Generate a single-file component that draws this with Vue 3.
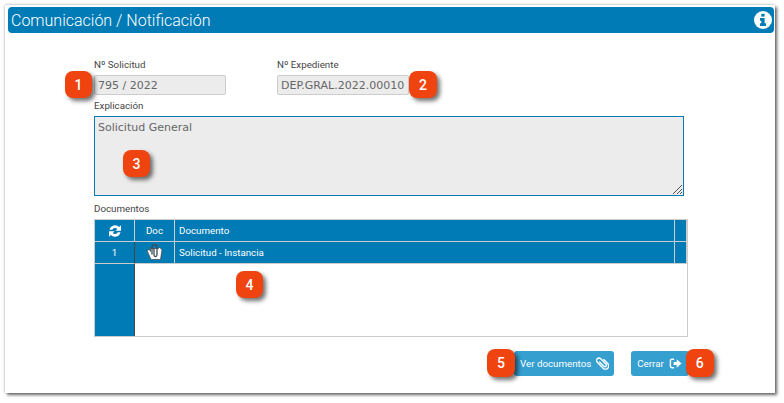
<template>
  <div class="page">
    <div class="card">
      <div class="title-bar">
        <span class="title">Comunicación / Notificación</span>
        <svg class="info-icon" viewBox="0 0 18 18" width="18" height="18">
          <circle cx="9" cy="9" r="9" fill="#fff" />
          <rect x="7.3" y="2.800" width="3.300" height="2.800" fill="#007bb6" />
          <path d="M6 7h4.600v5.200h1.400V15H6v-2.800h1.300V9.700H6z" fill="#007bb6" />
        </svg>
      </div>

      <div class="form">
        <div class="row-top">
          <div class="field">
            <label>Nº Solicitud</label>
            <div class="input">795 / 2022</div>
            <span class="badge badge-1">1</span>
          </div>
          <div class="field">
            <label>Nº Expediente</label>
            <div class="input">DEP.GRAL.2022.00010</div>
            <span class="badge badge-2">2</span>
          </div>
        </div>

        <div class="field-wide">
          <label>Explicación</label>
          <div class="textarea">
            Solicitud General
            <svg class="grip" viewBox="0 0 10 10" width="10" height="10">
              <path d="M1 10L10 1M5 10L10 5M8 10L10 8" stroke="#555" stroke-width="1" fill="none" />
            </svg>
          </div>
          <span class="badge badge-3">3</span>
        </div>

        <div class="docs">
          <label>Documentos</label>
          <div class="grid">
            <div class="cell head center">
              <svg viewBox="0 0 14 14" width="14" height="14">
                <path d="M1.500 5.800A5.700 5.700 0 0 1 11.200 3L13 1.200V6.800H7.400L9.300 4.900A3 3 0 0 0 4.300 5.800z" fill="#fff" />
                <path d="M12.500 8.200A5.700 5.700 0 0 1 2.800 11L1 12.800V7.200H6.600L4.700 9.100A3 3 0 0 0 9.700 8.200z" fill="#fff" />
              </svg>
            </div>
            <div class="cell head center">Doc</div>
            <div class="cell head">Documento</div>
            <div class="cell head"></div>

            <div class="cell center dark-edge">1</div>
            <div class="cell center">
              <svg viewBox="0 0 17 17" width="17" height="17">
                <path d="M1 6.500L3.500 5.500L4.500 7.500V4.500H12.500L13.500 3.500L16 5.500L14.500 15.500H5L3 11z" fill="#fff" stroke="#444" stroke-width=".7" />
                <path d="M6 10.500V3.200a2.500 2.500 0 0 1 5 0V11a1.500 1.500 0 0 1-3 0V4" fill="none" stroke="#3d4a55" stroke-width="1.300" />
              </svg>
            </div>
            <div class="cell">Solicitud - Instancia</div>
            <div class="cell"></div>

            <div class="cell filler-side dark-edge"></div>
            <div class="filler-body"></div>
          </div>
          <span class="badge badge-4">4</span>
        </div>

        <div class="actions">
          <div class="btn-wrap first">
            <span class="badge badge-5">5</span>
            <button class="btn">
              Ver documentos
              <svg viewBox="0 0 14 14" width="13" height="13">
                <path d="M3 5.500L8 10.500a1.600 1.600 0 0 0 2.300-2.300L4.600 2.500a2.600 2.600 0 0 0-3.700 3.700L7.200 12.500a3.500 3.500 0 0 0 5-5L7.500 2.800" fill="none" stroke="#fff" stroke-width="1.500" transform="translate(.5 -.5)" />
              </svg>
            </button>
          </div>
          <div class="btn-wrap">
            <button class="btn btn-close">
              Cerrar
              <svg viewBox="0 0 14 14" width="13" height="13">
                <path d="M5.500 2.500H3A1.500 1.500 0 0 0 1.500 4v6A1.500 1.500 0 0 0 3 11.500h2.500" fill="none" stroke="#fff" stroke-width="1.600" />
                <path d="M5 5.300H8.300V2.300L13.500 7L8.300 11.700V8.700H5z" fill="#fff" />
              </svg>
            </button>
            <span class="badge badge-6">6</span>
          </div>
        </div>
      </div>
    </div>
  </div>
</template>

<script setup>
</script>

<style>
html,
body {
  margin: 0;
  background: #fff;
}
</style>

<style scoped>
.page {
  width: 784px;
  height: 403px;
  box-sizing: border-box;
  padding: 5px 9px 10px 5px;
  font-family: Roboto, "Liberation Sans", sans-serif;
}

.card {
  height: 100%;
  box-sizing: border-box;
  padding: 2px 1px 0 3px;
  background: #fff;
  box-shadow: 2px 2px 3px rgba(0, 0, 0, 0.6), 0 -1px 2px rgba(0, 0, 0, 0.12), -1px 0 2px rgba(0, 0, 0, 0.12);
}

.title-bar {
  height: 26px;
  display: flex;
  align-items: center;
  justify-content: space-between;
  padding: 0 2px 0 3px;
  background: #007bb6;
  border-radius: 4px;
}

.title {
  font-size: 16px;
  font-weight: 300;
  color: #fff;
}

.form {
  padding: 26px 0 0 86px;
}

label {
  display: block;
  height: 11px;
  line-height: 11px;
  font-size: 9.75px;
  color: #444;
}

.row-top {
  display: flex;
  gap: 51px;
}

.field {
  position: relative;
  width: 132px;
}

.input {
  height: 20px;
  margin-top: 5px;
  box-sizing: border-box;
  padding: 0 3px;
  line-height: 19px;
  font-family: "DejaVu Sans", sans-serif;
  font-size: 11px;
  color: #666;
  white-space: nowrap;
  overflow: hidden;
  background: #ececec;
  border: 1px solid #ccc;
  border-radius: 2px;
}

.field-wide {
  position: relative;
  width: 590px;
  margin-top: 5px;
}

.textarea {
  position: relative;
  height: 80px;
  box-sizing: border-box;
  margin-top: 5px;
  padding: 4px 3px;
  font-family: "DejaVu Sans", sans-serif;
  font-size: 11px;
  line-height: 14px;
  color: #666;
  background: #ececec;
  border: 1px solid #007bb6;
}

.grip {
  position: absolute;
  right: 1px;
  bottom: 1px;
}

.docs {
  position: relative;
  width: 594px;
  margin-top: 7px;
}

.docs label {
  margin-bottom: 5px;
}

.grid {
  display: grid;
  grid-template-columns: 40px 40px 500px 1fr;
  grid-template-rows: 22px 22px 72px;
  height: 118px;
  box-sizing: border-box;
  background: #fff;
  border: 1px solid #ccc;
}

.cell {
  display: flex;
  align-items: center;
  padding-left: 4px;
  font-size: 9.75px;
  color: #fff;
  background: #007bb6;
  border-right: 1px solid #ccc;
  border-bottom: 1px solid #ccc;
  box-sizing: border-box;
}

.center {
  justify-content: center;
  padding-left: 0;
}

.dark-edge {
  border-right-color: #444;
}

.filler-side {
  border-bottom: 0;
}

.filler-body {
  grid-column: 2 / 5;
}

.actions {
  display: flex;
  justify-content: flex-start;
  margin-top: 14px;
  padding-left: 420px;
}

.btn-wrap {
  position: relative;
}

.btn-wrap.first {
  margin-right: 17px;
}

.btn {
  height: 25px;
  display: flex;
  align-items: center;
  gap: 5px;
  padding: 0 5px 0 6px;
  font-family: Roboto, "Liberation Sans", sans-serif;
  font-size: 9.75px;
  color: #fff;
  background: #359fd0;
  border: 0;
  border-radius: 3px;
}

.btn-close {
  padding-right: 7px;
}

.badge {
  position: absolute;
  width: 27px;
  height: 27px;
  display: flex;
  align-items: center;
  justify-content: center;
  font-size: 14px;
  font-weight: 500;
  color: #fff;
  background: #f04410;
  border-radius: 8px;
  box-shadow: 3px 3px 4px rgba(0, 0, 0, 0.55);
}

.badge-1 {
  left: -29px;
  top: 12px;
}

.badge-2 {
  left: 132px;
  top: 12px;
  width: 28px;
}

.badge-3 {
  left: 29px;
  top: 50px;
}

.badge-4 {
  left: 142px;
  top: 68px;
}

.badge-5 {
  left: -27px;
  top: -2px;
  width: 28px;
  height: 28px;
}

.badge-6 {
  right: -25px;
  top: -2px;
  width: 28px;
  height: 28px;
}
</style>
